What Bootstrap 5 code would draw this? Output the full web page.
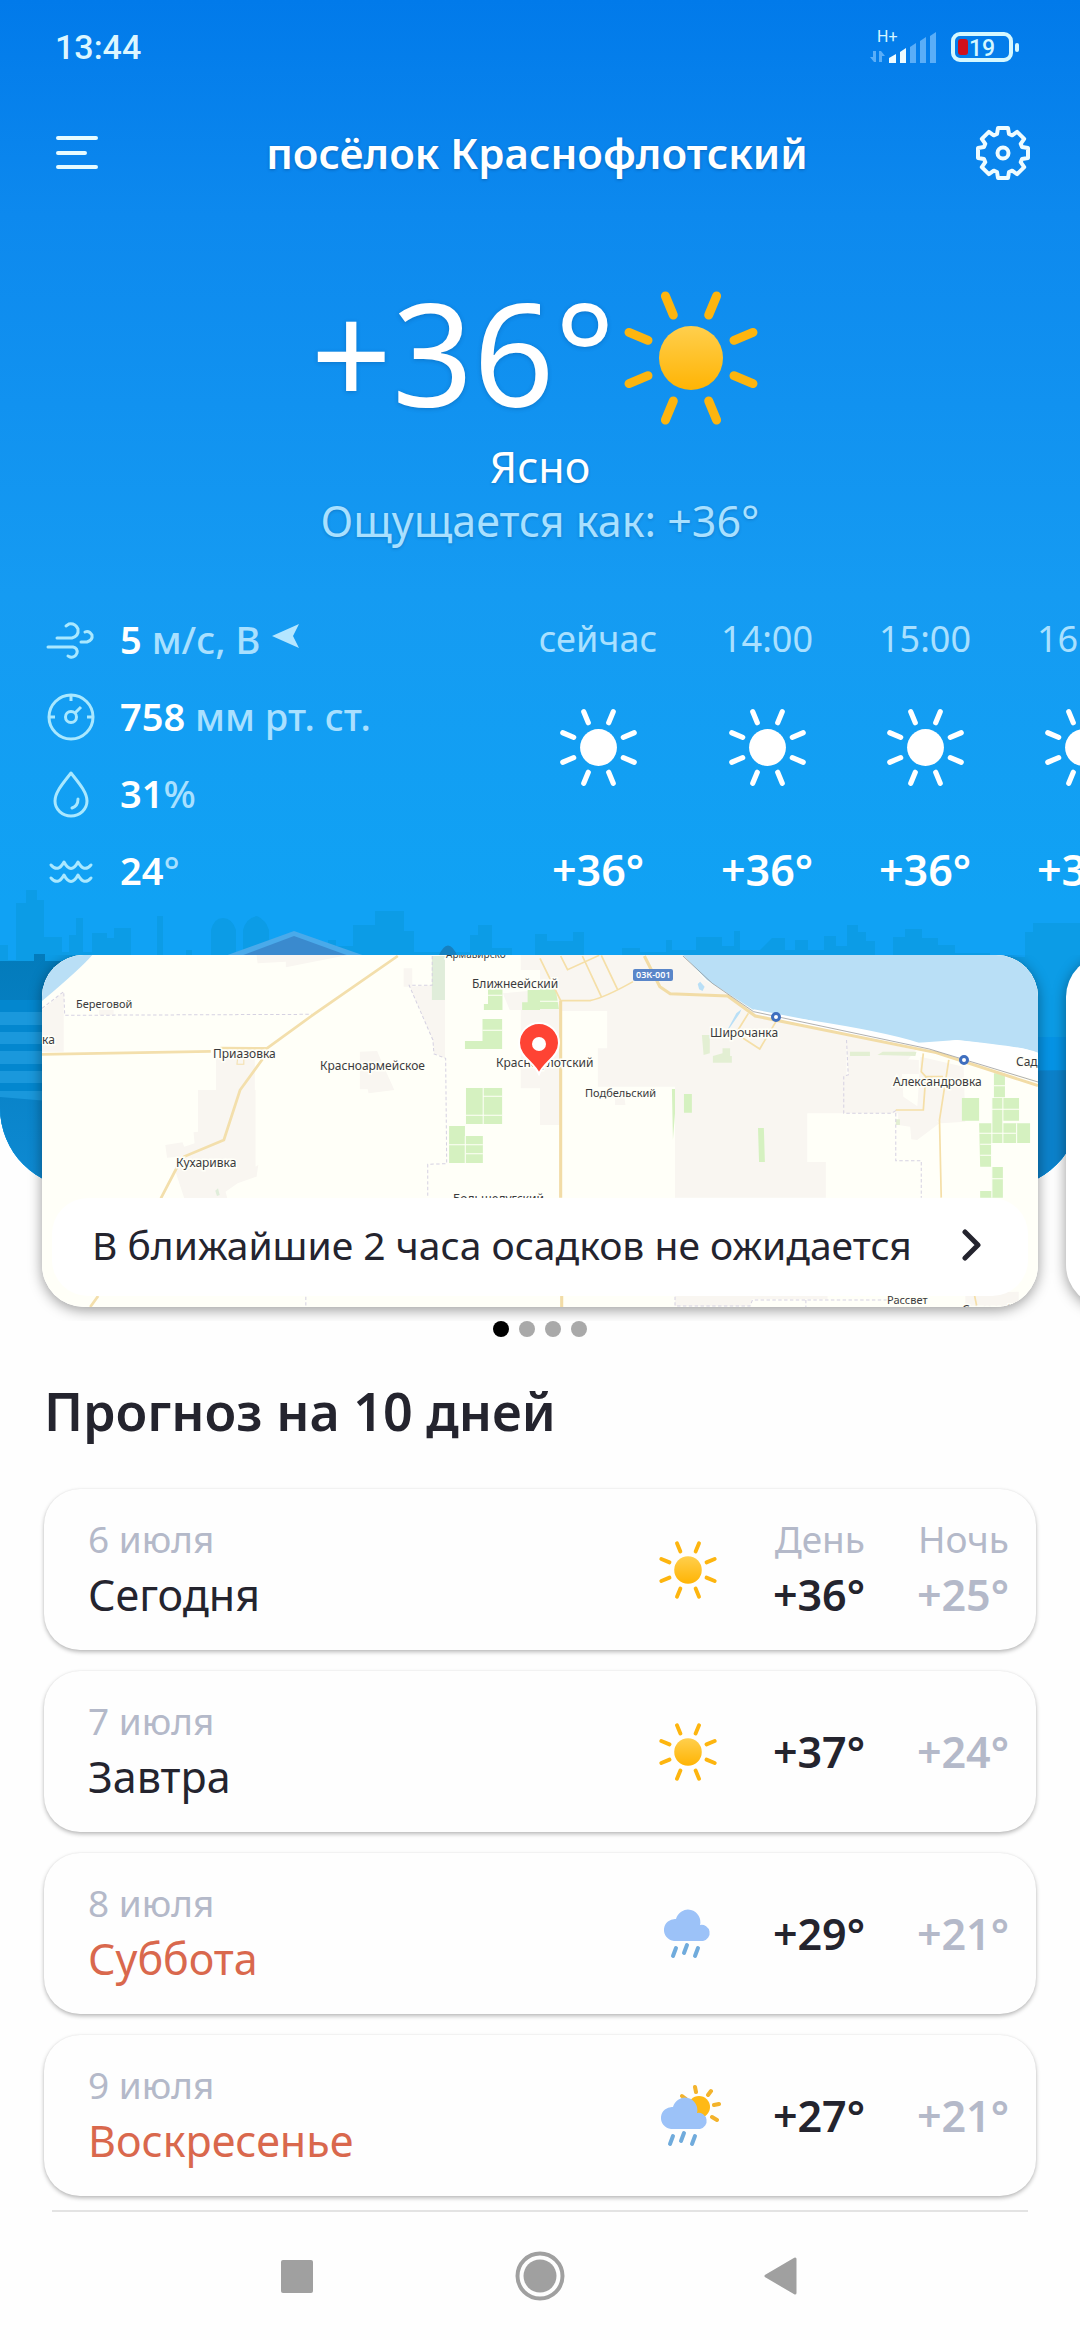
<!DOCTYPE html>
<html lang="ru">
<head>
<meta charset="utf-8">
<meta name="viewport" content="width=device-width, initial-scale=1">
<title>Погода</title>
<link href="https://cdn.jsdelivr.net/npm/bootstrap@5.3.0/dist/css/bootstrap.min.css" rel="stylesheet">
<style>
  body { font-family: "Noto Sans", "Open Sans", sans-serif; background: #fefefe; color: #24242e; overflow-x: hidden; }
  button { background: none; border: 0; padding: 0; color: inherit; }
  svg { display: block; flex: none; }
  .hero { background: linear-gradient(#017aea, #0d89ee 18%, #159bf2 50%, #10a2f4 76%, #10a2f4); border-radius: 0 0 80px 80px; padding-bottom: 279px; color: #fff; }
  .hero-front { position: relative; }
  .skyline { position: absolute; left: 0; bottom: 0; width: 100%; height: 308px; }
  .statusbar { height: 94px; padding: 0 60px 0 55px; font-family: Roboto, sans-serif; }
  .clock { font-size: 34px; font-weight: 500; color: #dcf6ff; }
  .topbar { height: 118px; padding: 0 50px 0 56px; }
  .place { font-size: 42px; font-weight: 600; text-shadow: 0 1px 3px rgba(0,40,90,.35); }
  .now-row { margin-top: 52px; padding-right: 6px; gap: 4px; }
  .now-temp { font-size: 142px; line-height: 176px; text-shadow: 0 1px 4px rgba(0,40,90,.25); }
  .now-sun { margin-top: 12px; }
  .now-text { font-size: 43px; line-height: 54px; text-shadow: 0 1px 3px rgba(0,40,90,.25); }
  .pale { color: #a9e0ff; }
  .facts { margin-top: 53px; }
  .fact-list { width: 508px; padding-left: 46px; font-size: 38px; line-height: 77px; }
  .fact-list li { gap: 24px; font-weight: 500; }
  .fact-list b { font-weight: 600; color: #fff; }
  .wind-text { display: flex; align-items: center; gap: 12px; }
  .hours { padding-top: 11px; line-height: 54px; }
  .hour { width: 158px; flex: none; }
  .hour:first-child { width: 180px; }
  .hour-time { font-size: 36px; }
  .hour svg { margin: 40px auto 54px; }
  .degree { font-size: 43px; font-weight: 600; }
  .carousel-strip { margin-top: -233px; padding: 0 0 14px 42px; gap: 28px; overflow: hidden; position: relative; }
  .info-card { flex: none; width: calc(100% - 42px); height: 352px; border: 0; border-radius: 42px; overflow: hidden; box-shadow: 0 3px 14px rgba(0,0,0,.4); background: #fff; }
  .map-art { width: 100%; height: 352px; }
  .map-art text { font-family: "Noto Sans", sans-serif; fill: #3b3b3d; stroke: #fffff8; stroke-width: 3px; paint-order: stroke; }
  .rain-link { position: absolute; left: 10px; right: 10px; bottom: 11px; height: 98px; padding: 0 46px 4px 40px; border-radius: 36px; background: #fff; color: #24242e; font-size: 39px; text-decoration: none; white-space: nowrap; }
  .dots { gap: 10px; }
  .dots button { width: 16px; height: 16px; border-radius: 50%; background: #a9a9a9; }
  .dots button.current { background: #000; }
  .heading { margin: 42px 44px 46px; font-size: 52px; line-height: 64px; font-weight: 600; }
  .days { margin: 0 44px; gap: 21px; }
  .day { height: 161px; border: 0; border-radius: 36px; padding: 0 27px 0 44px; background: #fefefe; box-shadow: 0 2px 4px rgba(0,0,0,.28), 0 0 2px rgba(0,0,0,.05); font-size: 43px; line-height: 56px; }
  .two-line { padding-bottom: 6px; }
  .day-date { font-size: 37px; font-weight: 400; color: #b4b9c9; }
  .day-icon { width: 94px; margin-right: 34px; }
  .temps { width: 96px; white-space: nowrap; }
  .temps + .temps { margin-left: 48px; }
  .night { color: #b4b9c9; }
  .weekend { color: #d9684d; }
  .rule { margin: 14px 52px 0; border-top: 2px solid #e3e3e3; }
  .sysnav { height: 128px; gap: 183px; }
  .sysnav button { width: 60px; height: 60px; }
</style>
</head>
<body>
<svg width="0" height="0" class="position-absolute" aria-hidden="true">
  <defs>
    <linearGradient id="sunfill" x1="0" y1="0" x2="0" y2="1"><stop offset="0" stop-color="#ffcf4d"/><stop offset="1" stop-color="#ffb404"/></linearGradient>
    <g id="ray-set" stroke-width="9" stroke-linecap="round" fill="none">
      <path d="M17.7-43 25.6-62M43-17.7 62-25.6M43 17.7 62 25.6M17.7 43 25.6 62M-17.7 43-25.6 62M-43 17.7-62 25.6M-43-17.7-62-25.6M-17.7-43-25.6-62"/>
    </g>
    <symbol id="sun" viewBox="-72 -72 144 144"><circle r="32" fill="url(#sunfill)"/><use href="#ray-set" stroke="#fdb50f"/></symbol>
    <symbol id="sun-white" viewBox="-72 -72 144 144"><circle r="32" fill="#fff"/><use href="#ray-set" stroke="#fff"/></symbol>
    <symbol id="rain" viewBox="0 0 62 62">
      <path d="M18 38a11 11 0 1 1 2-22 12 12 0 0 1 24 6 8 8 0 1 1 3 16Z" fill="#9cc2f8" transform="translate(-1 0)"/>
      <path d="M19 45 16 53M30 42 27 50M41 45 38 53" stroke="#70abdc" stroke-width="4" stroke-linecap="round"/>
    </symbol>
  </defs>
</svg>

<header class="hero position-relative overflow-hidden">
  <svg class="skyline" viewBox="0 0 1080 308" preserveAspectRatio="none" aria-hidden="true">
    <defs><linearGradient id="sea" x1="0" y1="0" x2="0" y2="1"><stop offset="0" stop-color="#037bbb"/><stop offset="1" stop-color="#0e8ad3"/></linearGradient></defs>
    <path fill="#0c9ce6" d="M0 82V65H8V80H16V23H26V10H37V20H44V57H62V72H69V55H76V38H83V72H92V53H107V58H114V48H131V76H157V36H163V76H186V70H192V76H211V50Q214 38 223 38Q232 38 236 50V72H243V50Q246 38 257 36Q266 40 269 50V76H328V60H336V66H353V45H375V31H404V51H414V72H470V55H478V45H492V68H512V76H535V54H547V61H573V52H584V77H622V68H640V72H666V60H672V70H696V57H722V66H734V51H740V70H760L772 58H785V70H795V60H808V70H824V56H836V66H847V45H858V52H866V61H875V77H893V57H905V49H922V58H938V65H955V73H990V77H1025V52H1033V43H1080V308H0Z"/>
    <path fill="#4aaaea" d="M222 77 294 51 368 77Z"/><path fill="#3a8ace" d="M238 77 294 56 352 77Z"/>
    <path fill="#1680c0" d="M438 77Q448 54 458 77Z"/>
    <path fill="url(#sea)" d="M0 81H34V74H45V81H540V308H0Z"/>
    <path fill="#0387cf" d="M0 120H60V216H0Z"/>
    <path fill="#1a98dc" d="M0 132H60V145H0ZM0 152H60V164H0ZM0 171H60V184H0ZM0 191H60V203H0ZM0 211H60V222L0 217Z"/>
    <path fill="#0694e6" d="M540 157H1080V308H540Z"/><path fill="#0c82cb" d="M540 196 1080 190V308H540Z"/>
  </svg>
  <div class="hero-front">
    <div class="statusbar d-flex justify-content-between align-items-center">
      <span class="clock">13:44</span>
      <svg width="152" height="40" viewBox="866 27 152 40" aria-label="Сигнал H+, батарея 19%">
        <text x="875" y="42" font-family="Roboto" font-size="16" fill="#d5f5ff">H+</text>
        <g fill="#5aaef8"><path d="M871 51h3v11h-2l-4-5h3zM877 51h2l4 5h-2v0h-1v6h-3z"/><path d="M908 47 914 43V63H908ZM918 41 924 37V63H918ZM928 36 934 32V63H928Z"/></g>
        <path d="M887 58 894 54V63H887ZM898 52 904 48V63H898Z" fill="#effcff"/>
        <rect x="951" y="34" width="58" height="26" rx="7" fill="none" stroke="#d5f8ff" stroke-width="4"/>
        <rect x="1013" y="43" width="4" height="9" rx="2" fill="#d5f8ff"/>
        <rect x="956" y="39" width="10" height="16" rx="3" fill="#cf0f1c"/>
        <text x="967" y="56" font-family="Roboto" font-size="23" font-weight="500" fill="#d5f8ff">19</text>
      </svg>
    </div>
    <nav class="topbar d-flex justify-content-between align-items-center">
      <button aria-label="Меню"><svg width="42" height="34" viewBox="0 0 42 34" stroke="#e6fbff" stroke-width="4" stroke-linecap="round"><path d="M2 2H40M2 17H29M2 31H40"/></svg></button>
      <h1 class="place mb-0">посёлок Краснофлотский</h1>
      <button aria-label="Настройки"><svg width="54" height="54" viewBox="-27 -27 54 54" fill="none" stroke="#effcff" stroke-width="4" stroke-linejoin="round"><path d="M-6-19-5-25H5L6-19 9.200-17.700 14.100-21.200 21.200-14.100 17.700-9.200 19-6 25-5V5L19 6 17.700 9.200 21.200 14.100 14.100 21.200 9.200 17.700 6 19 5 25H-5L-6 19-9.200 17.700-14.100 21.200-21.200 14.100-17.700 9.200-19 6-25 5V-5L-19-6-17.700-9.200-21.200-14.100-14.100-21.200-9.200-17.700Z"/><circle r="5.500"/></svg></button>
    </nav>
    <section class="text-center">
      <div class="now-row d-flex justify-content-center align-items-center">
        <span class="now-temp">+36°</span>
        <svg class="now-sun" width="144" height="144"><use href="#sun"/></svg>
      </div>
      <div class="now-text">Ясно</div>
      <div class="now-text pale">Ощущается как: +36°</div>
    </section>
    <section class="facts d-flex">
      <ul class="fact-list list-unstyled mb-0 flex-shrink-0 pale">
        <li class="d-flex align-items-center"><svg width="50" height="50" viewBox="-25 -25 50 50" fill="none" stroke="#a9e8ff" stroke-width="3" stroke-linecap="round"><path d="M-23 7H2Q7 8 6 13Q4 18-1 17L-3 16M-14-2H1Q8-4 7-11Q4-17-2-16L-5-14M10 2H16Q22 0 21-5Q18-10 14-8"/></svg>
          <div class="wind-text"><span><b>5</b> м/с, В</span>
          <svg width="28" height="26" viewBox="0 0 28 26" class="mb-2"><path d="M0 13 27 1 21 13 27 25Z" fill="#b4e6ff"/></svg></div></li>
        <li class="d-flex align-items-center"><svg width="50" height="50" viewBox="-25 -25 50 50" fill="none" stroke="#a9e8ff" stroke-width="3"><circle r="22"/><circle r="5.500"/><path d="M4-4 10-10M0-22V-16M-22 0H-16M22 0H16"/></svg>
          <span><b>758</b> мм рт. ст.</span></li>
        <li class="d-flex align-items-center"><svg width="50" height="50" viewBox="-25 -25 50 50" fill="none" stroke="#a9e8ff" stroke-width="3" stroke-linejoin="round" stroke-linecap="round"><path d="M0-21C-7-12-16-2-16 7A16 15 0 0 0 16 7C16-2 7-12 0-21ZM7 5Q7 12 1 14"/></svg>
          <span><b>31</b>%</span></li>
        <li class="d-flex align-items-center"><svg width="50" height="50" viewBox="-25 -25 50 50" fill="none" stroke="#a9e8ff" stroke-width="3" stroke-linecap="round" stroke-linejoin="round"><path d="M-20-6Q-13 2-7-9Q0 4 7-9Q13 2 20-6M-20 7Q-13 15-7 4Q0 17 7 4Q13 15 20 7"/></svg>
          <span><b>24</b>°</span></li>
      </ul>
      <div class="hours d-flex text-center">
        <div class="hour"><div class="hour-time pale">сейчас</div><svg width="83" height="83"><use href="#sun-white"/></svg><div class="degree">+36°</div></div>
        <div class="hour"><div class="hour-time pale">14:00</div><svg width="83" height="83"><use href="#sun-white"/></svg><div class="degree">+36°</div></div>
        <div class="hour"><div class="hour-time pale">15:00</div><svg width="83" height="83"><use href="#sun-white"/></svg><div class="degree">+36°</div></div>
        <div class="hour"><div class="hour-time pale">16:00</div><svg width="83" height="83"><use href="#sun-white"/></svg><div class="degree">+36°</div></div>
      </div>
    </section>
  </div>
</header>

<main>
  <div class="carousel-strip d-flex">
    <article class="info-card position-relative">
      <svg class="map-art" viewBox="0 0 996 352" preserveAspectRatio="xMidYMid slice" aria-label="Карта осадков">
        <rect width="996" height="352" fill="#fffff8"/>
        <g transform="matrix(.3444 0 0 .3333 -42 -75)">
          <path fill="#b9dff6" d="M120 225H268Q235 265 120 365Z"/>
          <path fill="#f9f6f1" d="M122 390 185 335V515H122ZM745 225H1010L830 262V245L748 250ZM1172 265H1197V320H1172ZM1190 320 1255 315V228H1292V535L1260 520 1257 480ZM627 535H740V630H742V860L750 855 745 890 690 910 655 935 660 955H535L508 870 520 830 485 833 480 795 530 787 535 800 565 790 562 757 575 755V630H627ZM1045 515 1095 513 1110 550 1145 630 1070 640 1068 628H1045ZM1512 225H1568V270H1512ZM1460 340 1568 330V625H1512V390H1480ZM288 390H330V405H288Z"/>
          <path fill="#e0edda" d="M1254 228H1292V360H1254ZM625 932 633 925 638 945 630 948Z"/>
          <path fill="#d5f1c0" d="M1417 325H1459V390H1405V372H1417ZM1532 330H1580V390H1516V367H1532ZM1401 417H1458V507H1350V483H1401ZM1353 624H1458V732H1353ZM1304 738H1350V768H1402V849H1304Z"/>
          <path stroke="#fffff8" stroke-width="3" fill="none" d="M1417 346H1459M1401 451H1458M1403 624V732M1404 649H1458M1353 706H1458M1351 768V849M1304 794H1402M1353 821H1402"/>
          <g fill="none" stroke="#d6d2e2" stroke-width="3" stroke-dasharray="10 7"><path d="M122 385 185 335 188 406 905 403M1255 228V316H1188L1257 480 1260 522 1294 535 1297 851 1242 853V955M888 1250V1282"/></g>
          <g fill="none" stroke="#f3dfac" stroke-width="8"><path d="M122 523 612 514M640 504 775 505 915 400 1155 228M762 538 697 630 650 780 535 830 520 850 467 955M285 1248 262 1281"/></g>
          <path d="M690 533H708V553H688Z" fill="none" stroke="#f3dfac" stroke-width="3"/>
        </g>
        <g transform="matrix(.3444 0 0 .3333 498 -75)">
          <path fill="#f9f6f1" d="M0 225H415L480 300 620 395 1100 500 1050 560 1055 650 1115 692 1160 730 1095 780 1078 778 1075 740 1040 735V700H882V588L895 585 890 480V700H776V846H830V953H392V620H168V505H195V393H62V735H0ZM932 530 1100 540V582H935ZM1200 490 1335 500 1320 560 1240 550ZM1105 530 1230 560 1235 725 1165 730 1095 690ZM218 650H245L248 675H218ZM998 660H1022V686H998ZM392 1248H835V1258H615L610 1278H392ZM1235 1240 1390 1235V1290H1235Z"/>
          <path fill="#b9dff6" d="M415 225H1450V520Q1420 505 1360 500L1210 480Q1120 495 1070 485L780 420 720 412 620 390 485 300ZM458 312 465 305 478 320 472 333 462 328ZM545 448 570 400 585 388 580 400 570 415 550 445Z"/>
          <path fill="#fff" d="M620 388 780 420Q1000 455 1100 488L1210 480Q1350 495 1410 507L1450 520V600L1130 520 620 400Z"/>
          <path fill="#d5f1c0" d="M0 325H45L55 387H0ZM418 642H441V698H418ZM633 744H650L653 846H636ZM383 627H392V700L386 780ZM1318 580H1350V652H1318ZM1225 654H1275V722H1225ZM1312 654H1391V722H1344V789H1312ZM1275 730H1423V789H1310V860H1278ZM1312 861H1344V953H1278V933H1312Z"/>
          <path fill="#e3efd3" d="M470 465H493V520L475 525ZM502 528 530 520V505H552V528H557V548H502ZM900 515H958V528H900ZM980 525 995 515H1093L1090 528ZM1033 718H1045V735H1033Z"/>
          <path stroke="#fffff8" stroke-width="3" fill="none" d="M0 364H55M1344 654V789M1384 730V789M1312 688H1391M1275 760H1382M1278 793H1310M1278 826H1310M1312 896H1344M1312 654V953M1318 617H1350"/>
          <path fill="none" stroke="#d6d2e2" stroke-width="3" stroke-dasharray="10 7" d="M890 480 895 585 882 588V700H1020L1033 692V842H1107V953M392 1250V1278H610L617 1260H1010M772 1260V1281"/>
          <path fill="none" stroke="#f5dfa8" stroke-width="5" d="M0 235 60 362H145Q190 352 270 305M60 228 80 269 172 226M123 228 178 350M178 226 225 328M575 450 605 400M590 475 638 507 685 425M1113 520 1107 575 1120 590M1187 540 1160 720 1165 953M1120 590 1113 690H1033M1262 1248 1268 1278M1120 590H1170"/>
          <path fill="none" stroke="#f2dca6" stroke-width="9" d="M60 362V953M63 1248V1281M303 228 348 320 378 341 545 348 625 408 1150 518 1446 617"/>
          <path fill="none" stroke="#8a8a8a" stroke-width="2" d="M415 228 500 310 620 395 1130 507 1446 606"/>
        </g>
        <g fill="#fff" stroke="#3f6fbf" stroke-width="3"><circle cx="734" cy="62" r="3.500"/><circle cx="922" cy="105" r="3.500"/></g>
        <rect x="591" y="14" width="40" height="12" rx="2" fill="#5a86c9"/>
        <g font-size="12">
          <text x="34" y="53" font-size="11">Береговой</text><text x="0" y="89">ка</text><text x="171" y="103">Приазовка</text><text x="278" y="115">Красноармейское</text>
          <text x="134" y="212">Кухаривка</text><text x="404" y="3" font-size="10">Армавирско</text><text x="430" y="33">Ближнеейский</text><text x="454" y="112">Краснофлотский</text>
          <text x="543" y="142" font-size="11">Подбельский</text><text x="411" y="248">Большелугский</text><text x="668" y="82">Широчанка</text>
          <text x="851" y="131">Александровка</text><text x="974" y="111">Сад</text><text x="845" y="349" font-size="11">Рассвет</text><text x="920" y="359">Садовый</text>
        </g>
        <text x="594" y="23" font-size="9" font-weight="600" style="fill:#fff;stroke:none">03К-001</text>
        <path d="M497 119C492 107 477 102 477 88A20 20 0 0 1 517 88C517 102 502 107 497 119Z" fill="#fe4334" stroke="#fff" stroke-width="2"/><circle cx="497" cy="89" r="7" fill="#fff"/>
      </svg>
      <a href="#" class="rain-link d-flex justify-content-between align-items-center">
        <span>В ближайшие 2 часа осадков не ожидается</span>
        <svg width="20" height="32" viewBox="0 0 20 32" fill="none" stroke="#24242e" stroke-width="5" stroke-linecap="round" stroke-linejoin="round"><path d="M3 3 16 16 3 29"/></svg>
      </a>
    </article>
    <article class="info-card"></article>
  </div>
  <div class="dots d-flex justify-content-center">
    <button class="current" aria-label="1"></button><button aria-label="2"></button><button aria-label="3"></button><button aria-label="4"></button>
  </div>

  <h2 class="heading">Прогноз на 10 дней</h2>
  <ul class="days list-unstyled d-flex flex-column">
    <li class="day card flex-row align-items-center">
      <div class="two-line flex-grow-1"><div class="day-date">6 июля</div><div>Сегодня</div></div>
      <div class="day-icon"><svg width="62" height="62" class="mx-auto"><use href="#sun"/></svg></div>
      <div class="two-line temps text-end"><div class="day-date">День</div><div class="degree">+36°</div></div>
      <div class="two-line temps text-end night"><div class="day-date">Ночь</div><div class="degree">+25°</div></div>
    </li>
    <li class="day card flex-row align-items-center">
      <div class="two-line flex-grow-1"><div class="day-date">7 июля</div><div>Завтра</div></div>
      <div class="day-icon"><svg width="62" height="62" class="mx-auto"><use href="#sun"/></svg></div>
      <div class="temps text-end degree">+37°</div>
      <div class="temps text-end degree night">+24°</div>
    </li>
    <li class="day card flex-row align-items-center">
      <div class="two-line flex-grow-1"><div class="day-date">8 июля</div><div class="weekend">Суббота</div></div>
      <div class="day-icon"><svg width="62" height="62" viewBox="0 0 62 62" class="mx-auto"><use href="#rain" width="62" height="62"/></svg></div>
      <div class="temps text-end degree">+29°</div>
      <div class="temps text-end degree night">+21°</div>
    </li>
    <li class="day card flex-row align-items-center">
      <div class="two-line flex-grow-1"><div class="day-date">9 июля</div><div class="weekend">Воскресенье</div></div>
      <div class="day-icon"><svg width="66" height="66" viewBox="0 0 66 66" class="mx-auto">
        <circle cx="44" cy="24" r="11" fill="#ffb915"/>
        <path d="M40 4 41 9M56 8 53 12M64 21 59 22M62 37 57 34M27 13 31 16" stroke="#f3b32c" stroke-width="4" stroke-linecap="round"/>
        <use href="#rain" x="-1" y="8" width="62" height="62"/></svg></div>
      <div class="temps text-end degree">+27°</div>
      <div class="temps text-end degree night">+21°</div>
    </li>
  </ul>
</main>
<div class="rule"></div>
<nav class="sysnav d-flex justify-content-center align-items-center">
  <button aria-label="Недавние"><svg width="60" height="60" fill="#a0a0a0"><rect x="14" y="14" width="32" height="33" rx="2"/></svg></button>
  <button aria-label="Домой"><svg width="60" height="60" fill="#a0a0a0"><circle cx="30" cy="30" r="22.500" fill="none" stroke="#a0a0a0" stroke-width="4"/><circle cx="30" cy="30" r="16.500"/></svg></button>
  <button aria-label="Назад"><svg width="60" height="60" fill="#a0a0a0" stroke="#a0a0a0" stroke-width="3" stroke-linejoin="round"><path d="M13 30 42 13V47Z"/></svg></button>
</nav>
<script src="https://cdn.jsdelivr.net/npm/bootstrap@5.3.0/dist/js/bootstrap.bundle.min.js"></script>
</body>
</html>
